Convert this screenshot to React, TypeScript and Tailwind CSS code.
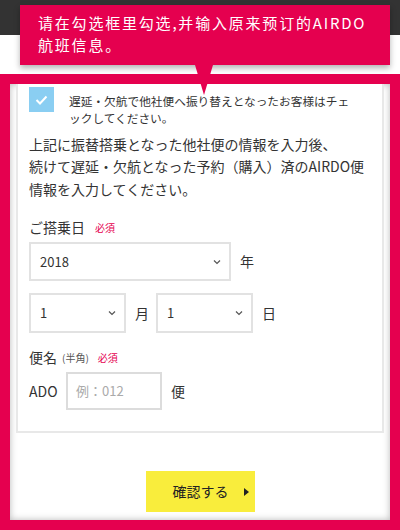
import React from "react";

const jp = { fontFamily: '"Noto Sans CJK JP", "Noto Sans", sans-serif' };
const sc = { fontFamily: '"Noto Sans CJK SC", "Noto Sans", sans-serif' };

// small chevron used by the select boxes
const Chevron = () => (
  <svg width="8" height="6" viewBox="0 0 8 6" fill="none">
    <path d="M1 1.5l3 3 3-3" stroke="#555" strokeWidth="1.2" />
  </svg>
);

interface SelectProps {
  value: string;
  width: string;
}

const SelectBox: React.FC<SelectProps> = ({ value, width }) => (
  <div
    className={`${width} h-full border-2 border-[#e2e2e2] bg-white flex items-center justify-between pl-[9px] pr-[8px] text-[13px] text-[#333]`}
  >
    <span>{value}</span>
    <Chevron />
  </div>
);

export default function App() {
  return (
    <div className="relative w-[400px] h-[530px] overflow-hidden bg-white text-[#333]" style={jp}>
      {/* dark site header */}
      <div className="h-[35px] bg-[#333]" />
      <div className="h-[39px] bg-white" />

      {/* pink highlight frame */}
      <div className="h-[456px] border-[10px] border-[#e5004f]">
        <div className="h-full bg-white shadow-[inset_0_0_7px_rgba(0,0,0,0.28)] px-[6px] flex flex-col">
          {/* form card */}
          <div className="border-2 border-t-0 border-[#e8e8e8] bg-white pt-[3px] px-[11px] pb-[21px]">
            <div className="flex items-start gap-[15px]">
              <div className="w-[25px] h-[25px] shrink-0 bg-[#8acef2] flex items-center justify-center">
                <svg width="13" height="10" viewBox="0 0 13 10" fill="none">
                  <path d="M1.5 5l3.5 3.5 6.5-7" stroke="#fff" strokeWidth="2" />
                </svg>
              </div>
              <p className="mt-[4.5px] text-[11.7px] leading-[17px]">
                遅延・欠航で他社便へ振り替えとなったお客様はチェ
                <br />
                ックしてください。
              </p>
            </div>

            <p className="mt-[7px] text-[14px] leading-[22.5px]">
              上記に振替搭乗となった他社便の情報を入力後、
              <br />
              続けて遅延・欠航となった予約（購入）済のAIRDO便
              <br />
              情報を入力してください。
            </p>

            {/* boarding date */}
            <div className="mt-[17px] h-[20px] flex items-center gap-[10px]">
              <span className="text-[14px]">ご搭乗日</span>
              <span className="text-[10px] text-[#e5004f]">必須</span>
            </div>
            <div className="mt-[5px] h-[39px] flex items-center gap-[9px]">
              <SelectBox value="2018" width="w-[202px]" />
              <span className="text-[14px]">年</span>
            </div>
            <div className="mt-[12px] h-[40px] flex items-center">
              <SelectBox value="1" width="w-[97px]" />
              <span className="text-[14px] ml-[9px] mr-[7px]">月</span>
              <SelectBox value="1" width="w-[97px]" />
              <span className="text-[14px] ml-[9px]">日</span>
            </div>

            {/* flight number */}
            <div className="mt-[14px] h-[20px] flex items-center">
              <span className="text-[14px]">便名</span>
              <span className="text-[10px] text-[#555] ml-[5px]">(半角)</span>
              <span className="text-[10px] text-[#e5004f] ml-[9px]">必須</span>
            </div>
            <div className="mt-[5px] h-[38px] flex items-center">
              <span className="text-[14px] w-[37px]">ADO</span>
              <div className="w-[96px] h-full border-2 border-[#dcdcdc] flex items-center pl-[8px] text-[13px] text-[#aaa]">
                例：012
              </div>
              <span className="text-[14px] ml-[9px]">便</span>
            </div>
          </div>

          {/* confirm button */}
          <div className="mt-[38px] self-center w-[109px] h-[41px] bg-[#f9ed3c] flex items-center pl-[27px]">
            <span className="text-[14px] text-[#222]">確認する</span>
            <span className="ml-[15px] w-0 h-0 border-y-[4px] border-y-transparent border-l-[5px] border-l-[#222]" />
          </div>
        </div>
      </div>

      {/* tooltip callout */}
      <div className="absolute left-[20px] top-[5px] w-[370px] h-[60px] bg-[#e5004f] shadow-[0_3px_6px_rgba(0,0,0,0.3)] pl-[18px] pt-[7px]">
        <p className="text-white text-[15px] leading-[22px] tracking-[1.8px]" style={sc}>
          请在勾选框里勾选,并输入原来预订的AIRDO
          <br />
          航班信息。
        </p>
        <div className="absolute left-[175px] top-[60px] w-0 h-0 border-x-[9px] border-x-transparent border-t-[30px] border-t-[#e5004f]" />
      </div>
    </div>
  );
}
